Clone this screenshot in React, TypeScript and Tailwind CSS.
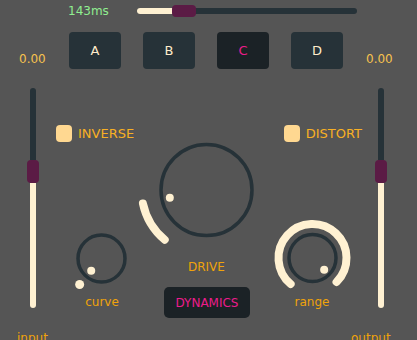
import React from 'react';

const CREAM = '#fff1d2';
const DARK = '#263238';

function pt(cx: number, cy: number, r: number, deg: number) {
  const a = (deg * Math.PI) / 180;
  return [cx + r * Math.cos(a), cy + r * Math.sin(a)];
}

function arc(cx: number, cy: number, r: number, from: number, to: number) {
  const [x0, y0] = pt(cx, cy, r, from);
  const [x1, y1] = pt(cx, cy, r, to);
  const large = to - from > 180 ? 1 : 0;
  return `M ${x0} ${y0} A ${r} ${r} 0 ${large} 1 ${x1} ${y1}`;
}

function Knob({ w, h, cx, cy, r, arcR, from, to, dotR }: {
  w: number; h: number; cx: number; cy: number; r: number; arcR: number; from: number; to: number; dotR: number;
}) {
  const [dx, dy] = pt(cx, cy, dotR, to);
  const [sx, sy] = pt(cx, cy, arcR, from);
  return (
    <svg width={w} height={h} viewBox={`0 0 ${w} ${h}`}>
      <circle cx={cx} cy={cy} r={r} fill="none" stroke={DARK} strokeWidth={3.5} />
      {to - from > 1 ? (
        <path d={arc(cx, cy, arcR, from, to)} fill="none" stroke={CREAM} strokeWidth={8} strokeLinecap="round" />
      ) : (
        <circle cx={sx} cy={sy} r={4.5} fill={CREAM} />
      )}
      <circle cx={dx} cy={dy} r={4} fill={CREAM} />
    </svg>
  );
}

function VSlider() {
  return (
    <div className="ml-[30px] mt-[19px] flex h-[220px] w-[6px] shrink-0 flex-col">
      <div className="h-[72px] rounded-t-full bg-[#263238]" />
      <div className="-ml-[3px] h-[23px] w-[12px] rounded-[4px] bg-[#5b1b45]" />
      <div className="flex-1 rounded-b-full bg-[#fff1d2]" />
    </div>
  );
}

function Check({ label }: { label: string }) {
  return (
    <div className="flex items-center gap-[6px]">
      <div className="h-[17px] w-[16px] rounded-[4px] bg-[#ffd891]" />
      <span className="text-[13px] leading-[14px] text-[#f8b024]">{label}</span>
    </div>
  );
}

export default function App() {
  const pads = ['A', 'B', 'C', 'D'];
  return (
    <div className="flex h-[340px] w-[417px] flex-col overflow-hidden bg-[#555555] font-['DejaVu_Sans',sans-serif]">
      {/* delay slider */}
      <div className="flex h-[22px] shrink-0 items-center">
        <span className="ml-[68px] w-[69px] text-[12px] leading-[14px] text-[#90ee90]">143ms</span>
        <div className="relative h-[6px] w-[220px] rounded-full bg-[#263238]">
          <div className="h-full w-[40px] rounded-l-full bg-[#fff1d2]" />
          <div className="absolute left-[35px] top-[-3px] h-[12px] w-[24px] rounded-[4px] bg-[#5b1b45]" />
        </div>
      </div>

      {/* pads */}
      <div className="mt-[10px] flex h-[37px] shrink-0">
        <span className="mb-[3px] ml-[19px] w-[50px] self-end text-[12px] leading-[14px] text-[#f7c24e]">0.00</span>
        <div className="flex gap-[22px]">
          {pads.map(p => (
            <div
              key={p}
              className={`flex w-[52px] items-center justify-center rounded-[4px] text-[13px] ${p === 'C' ? 'bg-[#1b2226] text-[#ec1c8c]' : 'bg-[#263238] text-[#ffeccb]'}`}
            >
              {p}
            </div>
          ))}
        </div>
        <span className="mb-[3px] ml-[23px] self-end text-[12px] leading-[14px] text-[#f7c24e]">0.00</span>
      </div>

      <div className="flex shrink-0">
        {/* input */}
        <div className="flex w-[56px] flex-col">
          <VSlider />
          <span className="ml-[17px] mt-[23px] text-[12px] leading-[14px] text-[#f0a30a]">input</span>
        </div>

        {/* center */}
        <div className="flex w-[309px] flex-col">
          <div className="mt-[56px] flex h-[17px] justify-between pr-[3px]">
            <Check label="INVERSE" />
            <Check label="DISTORT" />
          </div>
          <div className="flex">
            <div className="ml-[14px] mt-[86px] flex w-[64px] flex-col items-center">
              <Knob w={64} h={64} cx={31.5} cy={30.5} r={23.5} arcR={34} from={130} to={130} dotR={16} />
              <span className="mt-[3px] text-[12px] leading-[14px] text-[#f0a30a]">curve</span>
            </div>
            <div className="ml-[2px] flex w-[120px] flex-col">
              <Knob w={120} h={110} cx={70.5} cy={48} r={45.5} arcR={65} from={130} to={168} dotR={37.5} />
              <span className="ml-[52px] mt-[8px] text-[12px] leading-[14px] text-[#f0a30a]">DRIVE</span>
              <div className="ml-[28px] mt-[13px] flex h-[31px] w-[86px] items-center justify-center rounded-[5px] bg-[#1b2226] text-[12px] text-[#ec1c8c]">
                DYNAMICS
              </div>
            </div>
            <div className="ml-[16px] mt-[76px] flex w-[80px] flex-col items-center">
              <Knob w={80} h={76} cx={40.5} cy={40} r={23.5} arcR={34} from={130} to={405} dotR={16.5} />
              <span className="mt-[1px] text-[12px] leading-[14px] text-[#f0a30a]">range</span>
            </div>
          </div>
        </div>

        {/* output */}
        <div className="flex w-[52px] flex-col">
          <div className="-ml-[17px]">
            <VSlider />
          </div>
          <span className="-ml-[14px] mt-[23px] whitespace-nowrap text-[12px] leading-[14px] text-[#f0a30a]">output</span>
        </div>
      </div>
    </div>
  );
}
